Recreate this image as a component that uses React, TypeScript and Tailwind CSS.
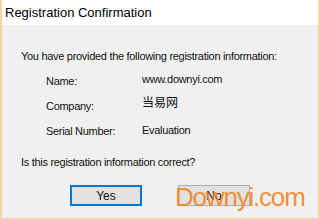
const body = { fontFamily: '"Liberation Sans", "Noto Sans CJK SC", sans-serif' };

const rows = [
  { label: 'Name:', value: 'www.downyi.com' },
  { label: 'Company:', value: '当易网' },
  { label: 'Serial Number:', value: 'Evaluation' },
];

export default function App() {
  return (
    <div className="w-[320px] h-[220px] flex flex-col border-x-2 border-b-2 border-[#f3d6a4] bg-[#f0f0f0] overflow-hidden" style={body}>
      <div className="h-[25px] shrink-0 bg-white flex items-center pl-[3px] text-[13px] text-black">
        Registration Confirmation
      </div>
      <div className="flex-1 relative text-[11px] tracking-[-0.3px] text-[#111] whitespace-nowrap">
        <div className="pl-[19px] pt-[24px] leading-[14px]">You have provided the following registration information:</div>
        <div className="pl-[44px] mt-[11px] flex flex-col gap-[11px]">
          {rows.map((r) => (
            <div key={r.label} className="flex items-center h-[14px]">
              <span className="w-[96px]">{r.label}</span>
              <span className={r.label === 'Company:' ? 'text-[12px] tracking-normal -mt-[6px]' : r.label === 'Name:' ? '-mt-[3px]' : '-mt-[1px]'}>{r.value}</span>
            </div>
          ))}
        </div>
        <div className="pl-[19px] mt-[17px] leading-[14px]">Is this registration information correct?</div>
        <div className="flex gap-[36px] pl-[68px] mt-[16px] tracking-normal">
          <button className="w-[72px] h-[21px] border-2 border-[#0078d7] bg-[#e1e1e1] text-[12px]">Yes</button>
          <button className="w-[72px] h-[21px] border border-[#adadad] bg-[#e1e1e1] text-[12px]">No</button>
        </div>
        <div className="absolute left-[173px] top-[159px] text-[26px] tracking-[-1.2px] text-[#f2862a] opacity-90 leading-none">
          Downyi.com
        </div>
      </div>
    </div>
  );
}
